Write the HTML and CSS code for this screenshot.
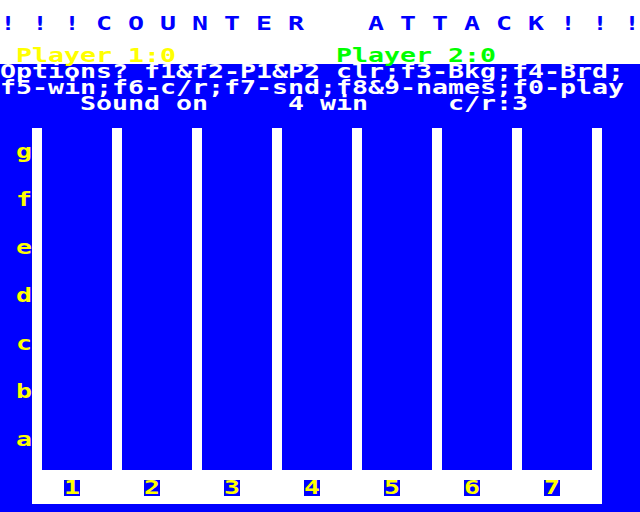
FILE: index.html
```html
<!DOCTYPE html>
<html>
<head>
<meta charset="utf-8">
<link rel="stylesheet" href="styles.css">
</head>
<body>
<div class="screen">
  <div class="top">
    <div class="line"></div>
    <div class="line title">! ! ! C O U N T E R    A T T A C K ! ! !</div>
    <div class="line"></div>
    <div class="line"> <span class="p1">Player 1:0</span>          <span class="p2">Player 2:0</span></div>
  </div>
  <div class="panel">
    <div class="line">Options? f1&amp;f2-P1&amp;P2 clr;f3-Bkg;f4-Brd;</div>
    <div class="line">f5-win;f6-c/r;f7-snd;f8&amp;9-names;f0-play</div>
    <div class="line">     Sound on     4 win     c/r:3</div>
    <div class="gap"></div>
    <div class="area">
      <div class="rows">
        <div class="line lbl">g</div>
        <div class="line lbl">f</div>
        <div class="line lbl">e</div>
        <div class="line lbl">d</div>
        <div class="line lbl">c</div>
        <div class="line lbl">b</div>
        <div class="line lbl">a</div>
      </div>
      <div class="board">
        <div class="col"></div>
        <div class="col"></div>
        <div class="col"></div>
        <div class="col"></div>
        <div class="col"></div>
        <div class="col"></div>
        <div class="col"></div>
        <div class="cell"><div class="numbox"><div class="line num">1</div></div></div>
        <div class="cell"><div class="numbox"><div class="line num">2</div></div></div>
        <div class="cell"><div class="numbox"><div class="line num">3</div></div></div>
        <div class="cell"><div class="numbox"><div class="line num">4</div></div></div>
        <div class="cell"><div class="numbox"><div class="line num">5</div></div></div>
        <div class="cell"><div class="numbox"><div class="line num">6</div></div></div>
        <div class="cell"><div class="numbox"><div class="line num">7</div></div></div>
      </div>
    </div>
  </div>
</div>
</body>
</html>
```
FILE: styles.css
```css
html, body {
  margin: 0;
  padding: 0;
}
body {
  width: 640px;
  height: 512px;
  overflow: hidden;
  background: #0000ff;
}
.screen {
  width: 640px;
  height: 512px;
  display: flex;
  flex-direction: column;
}
.line {
  height: 16px;
  line-height: 16px;
  font-family: "DejaVu Sans Mono", monospace;
  font-weight: bold;
  font-size: 26.58px;
  white-space: pre;
  transform: scaleY(0.7);
  overflow: visible;
}
.top {
  background: #ffffff;
}
.title {
  color: #0000ff;
}
.p1 {
  color: #ffff00;
}
.p2 {
  color: #00ff00;
}
.panel {
  flex: 1;
  background: #0000ff;
  color: #ffffff;
  display: flex;
  flex-direction: column;
}
.gap {
  height: 16px;
}
.area {
  display: flex;
  height: 376px;
}
.rows {
  width: 16px;
  padding-left: 16px;
  padding-top: 16px;
  display: flex;
  flex-direction: column;
  gap: 32px;
}
.lbl {
  color: #ffff00;
  width: 16px;
}
.board {
  width: 550px;
  padding: 0 10px;
  background: #ffffff;
  display: grid;
  grid-template-columns: repeat(7, 70px);
  grid-template-rows: 342px 34px;
  column-gap: 10px;
}
.col {
  background: #0000ff;
}
.cell {
  padding-top: 10px;
  padding-left: 22px;
}
.numbox {
  width: 16px;
  height: 16px;
  background: #0000ff;
}
.num {
  color: #ffff00;
  text-align: center;
}
```
